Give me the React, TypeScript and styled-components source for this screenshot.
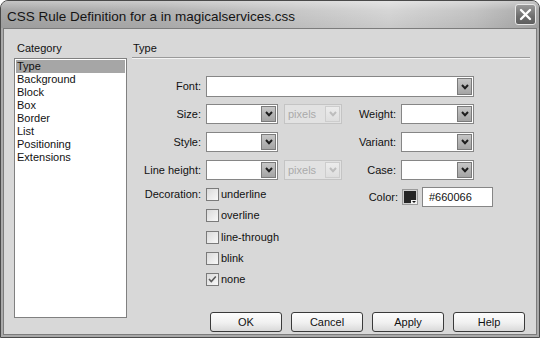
import React from "react"
import styled, { createGlobalStyle } from "styled-components"

const GlobalStyle = createGlobalStyle`
    html, body {
        margin: 0;
        padding: 0;
        background: #ffffff;
    }
    body {
        font-family: "Liberation Sans", Arial, sans-serif;
    }
`

const categories = ["Type", "Background", "Block", "Box", "Border", "List", "Positioning", "Extensions"]
const decorations = [
    { name: "underline", checked: false },
    { name: "overline", checked: false },
    { name: "line-through", checked: false },
    { name: "blink", checked: false },
    { name: "none", checked: true },
]

const Chevron: React.FunctionComponent<{ color: string }> = ({ color }) => (
    <svg width="8" height="6" viewBox="0 0 8 6">
        <polyline points="1,1 4,4.2 7,1" fill="none" stroke={color} strokeWidth="2" />
    </svg>
)

const Select: React.FunctionComponent<{ value?: string; disabled?: boolean; tall?: boolean }> = ({ value, disabled, tall }) => (
    <SelectBox $disabled={disabled} $tall={tall}>
        <SelectValue $disabled={disabled}>{value}</SelectValue>
        <DropButton $disabled={disabled}>
            <Chevron color={disabled ? "#bdbdbd" : "#1e1e1e"} />
        </DropButton>
    </SelectBox>
)

const Checkbox: React.FunctionComponent<{ checked: boolean }> = ({ checked }) => (
    <CheckBoxSquare>
        {checked && (
            <svg width="11" height="11" viewBox="0 0 11 11">
                <polyline points="2,5 4.3,7.5 8.8,2.5" fill="none" stroke="#5a5a5a" strokeWidth="1.6" />
            </svg>
        )}
    </CheckBoxSquare>
)

const ColorSwatch: React.FunctionComponent<{ color: string }> = ({ color }) => (
    <SwatchIcon width="16" height="16" viewBox="0 0 16 16">
        <rect x="0.5" y="0.5" width="15" height="15" fill="#d0d0d0" stroke="#9a9a9a" />
        <rect x="2" y="2" width="12" height="12" fill={color} />
        <rect x="9" y="11" width="6" height="4" fill="#f2f2f2" />
        <polygon points="10,12 14,12 12,14" fill="#111" />
    </SwatchIcon>
)

export default function App() {
    return (
        <>
            <GlobalStyle />
            <Window>
                <TitleBar>
                    <Title>CSS Rule Definition for a in magicalservices.css</Title>
                    <CloseButton>
                        <svg width="13" height="13" viewBox="0 0 13 13">
                            <path d="M2 2 L11 11 M11 2 L2 11" stroke="#ffffff" strokeWidth="2.4" strokeLinecap="round" />
                        </svg>
                    </CloseButton>
                </TitleBar>
                <Body>
                    <LeftColumn>
                        <SectionHeader>Category</SectionHeader>
                        <ListBox>
                            {categories.map((c, i) => (
                                <ListItem key={c} $selected={i === 0}>{c}</ListItem>
                            ))}
                        </ListBox>
                    </LeftColumn>
                    <RightColumn>
                        <PanelHeader>Type</PanelHeader>
                        <Form>
                            <Label>Font:</Label>
                            <FullSpan><Select tall /></FullSpan>

                            <Label>Size:</Label>
                            <Select />
                            <UnitCell><Select disabled value="pixels" /></UnitCell>
                            <Label>Weight:</Label>
                            <Select />

                            <Label>Style:</Label>
                            <Select />
                            <span />
                            <Label>Variant:</Label>
                            <Select />

                            <Label>Line height:</Label>
                            <Select />
                            <UnitCell><Select disabled value="pixels" /></UnitCell>
                            <Label>Case:</Label>
                            <Select />

                            <Label $compact>Decoration:</Label>
                            <CheckList>
                                {decorations.map(d => (
                                    <CheckRow key={d.name}>
                                        <Checkbox checked={d.checked} />
                                        <CheckLabel>{d.name}</CheckLabel>
                                    </CheckRow>
                                ))}
                            </CheckList>
                            <ColorLabel>Color:</ColorLabel>
                            <ColorField>
                                <ColorSwatch color="#262626" />
                                <TextInput>#660066</TextInput>
                            </ColorField>
                        </Form>
                        <ButtonRow>
                            <Button>OK</Button>
                            <Button>Cancel</Button>
                            <Button>Apply</Button>
                            <Button>Help</Button>
                        </ButtonRow>
                    </RightColumn>
                </Body>
            </Window>
        </>
    )
}

const Window = styled.div`
    width: 540px;
    height: 338px;
    box-sizing: border-box;
    border: 1px solid #4a4a4a;
    border-radius: 8px 8px 0 0;
    background: #a9a9a9;
    display: flex;
    flex-direction: column;
    overflow: hidden;
`

const TitleBar = styled.div`
    height: 27px;
    flex-shrink: 0;
    display: flex;
    align-items: flex-start;
    justify-content: space-between;
    padding: 0 3px 0 6px;
    background:
        linear-gradient(to bottom, rgba(255, 255, 255, 0.35) 0%, rgba(255, 255, 255, 0) 35%, rgba(0, 0, 0, 0.06) 100%),
        linear-gradient(to right, #a6a6a6 0%, #b2b2b2 30%, #c8c8c8 55%, #d6d6d6 72%, #c4c4c4 88%, #a8a8a8 100%);
`

const Title = styled.div`
    margin-top: 8px;
    font-size: 13.5px;
    line-height: 16px;
    color: #141414;
    white-space: nowrap;
`

const CloseButton = styled.div`
    width: 21px;
    height: 21px;
    margin-top: 3px;
    box-sizing: border-box;
    border: 1px solid #e8e8e8;
    border-radius: 3px;
    background: linear-gradient(to bottom, #9a9a9a, #6e6e6e 60%, #5e5e5e);
    display: flex;
    align-items: center;
    justify-content: center;
`

const Body = styled.div`
    flex: 1;
    margin: 0 2px 2px;
    border: 1px solid #7c7c7c;
    background: #d8d8d8;
    padding: 12px 6px 2px 10px;
    display: grid;
    grid-template-columns: 113px 1fr;
    column-gap: 5px;
    font-size: 11px;
    color: #111;
`

const LeftColumn = styled.div`
    display: flex;
    flex-direction: column;
`

const SectionHeader = styled.div`
    height: 17px;
    line-height: 14px;
    padding-left: 3px;
`

const ListBox = styled.div`
    height: 260px;
    box-sizing: border-box;
    border: 1px solid #808080;
    background: #ffffff;
    padding: 1px;
`

const ListItem = styled.div<{ $selected?: boolean }>`
    height: 13px;
    line-height: 13px;
    padding-left: 1px;
    background: ${({ $selected }) => ($selected ? "#a6a6a6" : "transparent")};
    color: #111;
`

const RightColumn = styled.div`
    display: flex;
    flex-direction: column;
`

const PanelHeader = styled.div`
    height: 16px;
    line-height: 14px;
    padding-left: 1px;
    border-bottom: 1px solid #9a9a9a;
    box-shadow: 0 1px 0 #f4f4f4;
`

const Form = styled.div`
    margin-top: 18px;
    display: grid;
    grid-template-columns: 74px 72px 64px 59px 73px;
    grid-template-rows: 20px 20px 20px 20px auto;
    row-gap: 8px;
`

const Label = styled.div<{ $compact?: boolean }>`
    text-align: right;
    padding-right: 5px;
    line-height: ${({ $compact }) => ($compact ? "13px" : "20px")};
    white-space: nowrap;
`

const ColorLabel = styled.div`
    text-align: right;
    padding-right: 3px;
    line-height: 20px;
    margin-top: -1px;
`

const FullSpan = styled.div`
    grid-column: 2 / 6;
`

const UnitCell = styled.div`
    display: flex;
    justify-content: flex-end;
    & > div {
        width: 58px;
    }
`

const SelectBox = styled.div<{ $disabled?: boolean; $tall?: boolean }>`
    display: flex;
    height: ${({ $tall }) => ($tall ? "21px" : "20px")};
    box-sizing: border-box;
    border: 1px solid ${({ $disabled }) => ($disabled ? "#c4c4c4" : "#868686")};
    background: ${({ $disabled }) => ($disabled ? "#e2e2e2" : "#ffffff")};
`

const SelectValue = styled.span<{ $disabled?: boolean }>`
    flex: 1;
    padding-left: 3px;
    line-height: 18px;
    color: ${({ $disabled }) => ($disabled ? "#aaaaaa" : "#111")};
`

const DropButton = styled.span<{ $disabled?: boolean }>`
    width: 15px;
    margin: 1px;
    box-sizing: border-box;
    border: 1px solid ${({ $disabled }) => ($disabled ? "#cdcdcd" : "#7a7a7a")};
    background: ${({ $disabled }) =>
        $disabled ? "linear-gradient(to bottom, #ececec, #dedede)" : "linear-gradient(to bottom, #c6c6c6, #a4a4a4)"};
    display: flex;
    align-items: center;
    justify-content: center;
`

const CheckList = styled.div`
    grid-column: 2 / 4;
    display: flex;
    flex-direction: column;
    gap: 8.3px;
`

const CheckRow = styled.div`
    display: flex;
    align-items: center;
    height: 13px;
`

const CheckBoxSquare = styled.span`
    width: 13px;
    height: 13px;
    box-sizing: border-box;
    border: 1px solid #7a7a7a;
    background: linear-gradient(135deg, #dadada, #f8f8f8);
    display: flex;
    align-items: center;
    justify-content: center;
`

const CheckLabel = styled.span`
    margin-left: 2px;
    line-height: 13px;
`

const ColorField = styled.div`
    grid-column: 5 / 6;
    margin-top: -1px;
    display: flex;
    align-items: center;
    gap: 4px;
    height: 20px;
    margin-left: 1px;
    white-space: nowrap;
`

const SwatchIcon = styled.svg`
    flex-shrink: 0;
    display: block;
`

const TextInput = styled.div`
    flex-shrink: 0;
    width: 71px;
    height: 20px;
    box-sizing: border-box;
    border: 1px solid #868686;
    background: #ffffff;
    padding-left: 6px;
    line-height: 18px;
`

const ButtonRow = styled.div`
    margin-top: auto;
    display: flex;
    justify-content: flex-end;
    gap: 9px;
    padding-right: 5px;
`

const Button = styled.div`
    width: 72px;
    height: 20px;
    box-sizing: border-box;
    border: 1px solid #3a3a3a;
    border-radius: 3px;
    background: linear-gradient(to bottom, #fdfdfd 0%, #f0f0f0 55%, #d9d9d9 100%);
    text-align: center;
    line-height: 18px;
    color: #111;
`
